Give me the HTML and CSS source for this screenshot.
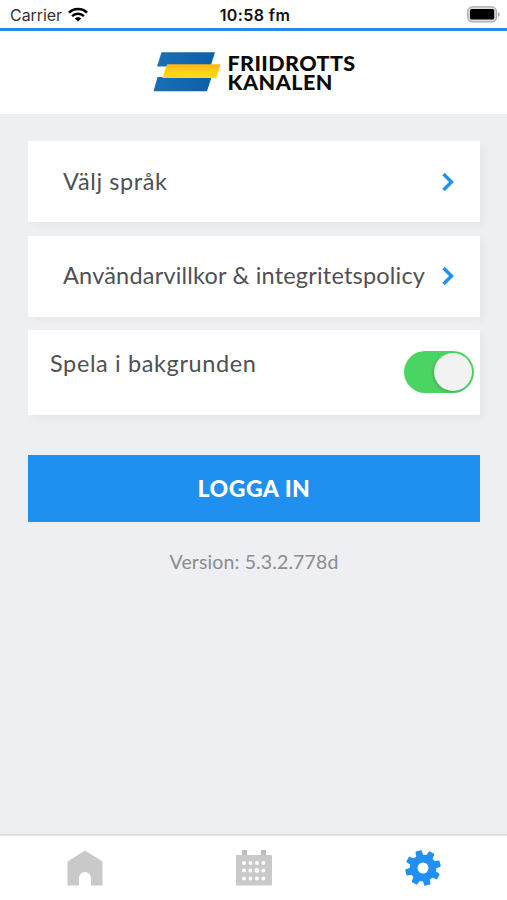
FILE: index.html
```html
<!DOCTYPE html>
<html lang="sv">
<head>
<meta charset="utf-8">
<title>Friidrottskanalen</title>
<link rel="stylesheet" href="styles.css">
</head>
<body>
<div class="app">
  <div class="status">
    <div class="carrier"><span>Carrier</span>
      <svg width="20" height="15" viewBox="0 0 20 15" fill="none" stroke="#000" stroke-width="2.5"><path d="M.9 5.7A13 13 0 0 1 19.1 5.7M4.1 9.1A8.4 8.4 0 0 1 15.9 9.1"/><path d="M10 14.6 6.7 11.5A4.8 4.8 0 0 1 13.3 11.5Z" fill="#000" stroke="none"/></svg>
    </div>
    <span class="time">10:58 fm</span>
    <svg class="battery" width="33" height="17" viewBox="0 0 33 17"><rect x=".8" y=".8" width="28.6" height="15" rx="4.5" fill="#ddd" stroke="#aaa" stroke-width="1.3"/><rect x="3" y="3" width="24.2" height="10.6" rx="1.5" fill="#000"/><path d="M31 6v5q1.7-.8 1.7-2.5T31 6Z" fill="#aaa"/></svg>
  </div>
  <header class="header">
    <svg class="flag" width="68" height="40" viewBox="0 0 68 40">
      <defs>
        <linearGradient id="blue" x2="1" y2="0"><stop stop-color="#1a6fb5"/><stop offset="1" stop-color="#0c5fa9"/></linearGradient>
        <linearGradient id="gold" x2="0" y2="1"><stop stop-color="#fbb515"/><stop offset=".6" stop-color="#ffd315"/><stop offset="1" stop-color="#ffdc1c"/></linearGradient>
      </defs>
      <path d="M8.500 .3H62L57.500 14.500H4Z" fill="url(#blue)"/>
      <path d="M4.500 25H58.500L54 39.200H.5Z" fill="url(#blue)"/>
      <path d="M14 12.300H67.500L63.500 26H9.500Z" fill="url(#gold)"/>
    </svg>
    <div class="brand"><div class="brand-top">FRIIDROTTS</div><div class="brand-bottom">KANALEN</div></div>
  </header>
  <main class="content">
    <div class="card"><span class="label language">Välj språk</span><svg class="chevron" width="14" height="20" viewBox="0 0 14 20"><path d="M2.5 2 10.5 10 2.5 18"/></svg></div>
    <div class="card"><span class="label terms">Användarvillkor &amp; integritetspolicy</span><svg class="chevron" width="14" height="20" viewBox="0 0 14 20"><path d="M2.5 2 10.5 10 2.5 18"/></svg></div>
    <div class="card setting"><span class="label play">Spela i bakgrunden</span><div class="toggle"><div class="knob"></div></div></div>
    <button class="login"><span>LOGGA IN</span></button>
    <div class="version"><span>Version: 5.3.2.778d</span></div>
  </main>
  <nav class="tabs">
    <div class="tab"><svg width="36" height="36" viewBox="0 0 36 36"><path d="M.5 35.5V11.5L18 .5 35.5 11.5V35.5H24V28a6 6 0 0 0-12 0V35.5Z" fill="#c9c9c9"/></svg></div>
    <div class="tab"><svg width="38" height="36" viewBox="0 0 38 36"><path d="M2 5H36Q37 5 37 6V34Q37 35.500 36 35.500H2Q1 35.500 1 34V6Q1 5 2 5Z" fill="#c9c9c9"/><path d="M7 0h5v5H7ZM26 0h5v5h-5Z" fill="#bdbdbd"/><path d="M9 13H32M9 20.500H32M9 28.500H32" stroke="#fff" stroke-width="3.900" stroke-linecap="round" stroke-dasharray="0 6.450"/><circle cx="21.900" cy="20.400" r="2.400" fill="#fff"/></svg></div>
    <div class="tab"><svg width="36" height="36" viewBox="-18 -18 36 36">
      <g fill="#2090f0" transform="rotate(-15)">
        <path id="tooth" d="M-3.700-11-3.200-17Q-3.100-17.700-2.400-17.700H2.400Q3.100-17.700 3.200-17L3.700-11Z"/>
        <use href="#tooth" transform="rotate(45)"/><use href="#tooth" transform="rotate(90)"/><use href="#tooth" transform="rotate(135)"/><use href="#tooth" transform="rotate(180)"/><use href="#tooth" transform="rotate(225)"/><use href="#tooth" transform="rotate(270)"/><use href="#tooth" transform="rotate(315)"/>
      </g>
      <circle r="9.400" fill="none" stroke="#2090f0" stroke-width="7.800"/></svg></div>
  </nav>
</div>
</body>
</html>
```
FILE: styles.css
```css
* { box-sizing: border-box; }
body { margin: 0; background: #eeeff3; font-family: Lato, "Liberation Sans", sans-serif; }
.app { width: 507px; height: 900px; display: flex; flex-direction: column; overflow: hidden; }
.status { height: 31px; flex: none; display: grid; grid-template-columns: 1fr auto 1fr; padding: 0 7px 0 10px; background: #fff; border-bottom: 3px solid #2589e6; font-family: Inter, sans-serif; line-height: 30px; color: #333; }
.carrier { display: flex; gap: 6px; font-size: 16px; letter-spacing: -.05px; }
.carrier svg { margin-top: 7px; }
.time { font-size: 16px; font-weight: 600; letter-spacing: .4px; color: #111; }
.battery { justify-self: end; margin-top: 6px; }
.header { height: 83px; flex: none; display: flex; justify-content: center; gap: 7px; padding: 21px 0 0 1px; background: #fff; }
.brand { width: 128px; margin-top: 2px; color: #0b0b0b; font-size: 21.500px; font-weight: 900; line-height: 19px; letter-spacing: .5px; white-space: nowrap; }
.brand-top { letter-spacing: .4px; }
.content { flex: 1; padding: 27px 27px 0 28px; }
.card { height: 81px; margin-bottom: 13.500px; padding: 0 25px 0 35px; display: flex; align-items: center; justify-content: space-between; background: #fff; box-shadow: 4px 4px 7px rgba(0, 0, 0, .035); }
.label { margin-top: -2px; font-size: 23.500px; line-height: 30px; color: #505052; white-space: nowrap; }
.language { letter-spacing: .6px; }
.terms { letter-spacing: .2px; }
.chevron { flex: none; fill: none; stroke: #2090f0; stroke-width: 3.400; }
.setting { height: 85px; padding: 0 6px 0 22px; }
.play { margin-top: -19px; letter-spacing: .62px; }
.toggle { width: 70px; height: 42px; margin-top: -1px; padding: 2px; border-radius: 21px; display: flex; justify-content: flex-end; background: #4ad562; }
.knob { width: 38px; height: 38px; border-radius: 50%; background: #f2f2f2; box-shadow: -1px 1px 3px rgba(0, 0, 0, .2); }
.login { display: block; width: 100%; height: 67px; margin-top: 40.400px; border: 0; background: #2090f0; color: #fff; font: 900 23px/67px Lato, sans-serif; letter-spacing: .5px; padding: 0; }
.version { margin-top: 27px; text-align: center; color: #8b8b8e; font-size: 19.500px; line-height: 26px; letter-spacing: .12px; }
.tabs { height: 66px; flex: none; display: grid; grid-template-columns: repeat(3, 1fr); background: #fff; border-top: 2px solid #dedfe2; }
.tab { display: flex; justify-content: center; padding-top: 14px; }
```
